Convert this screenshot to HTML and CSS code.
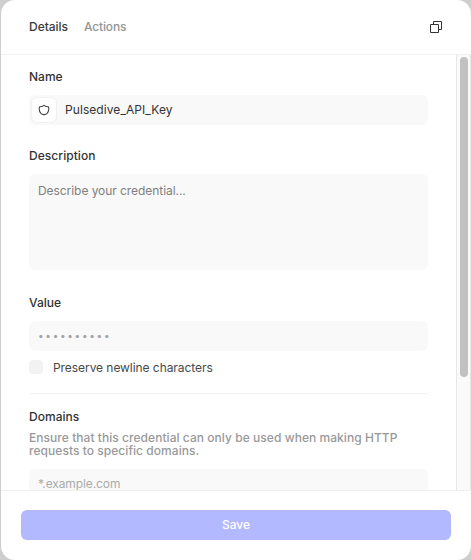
FILE: index.html
```html
<!DOCTYPE html>
<html lang="en">
<head>
<meta charset="utf-8">
<title>Credential</title>
<link rel="stylesheet" href="styles.css">
</head>
<body>
<main class="dialog">
  <header class="header">
    <nav class="tabs">
      <span class="tab tab-active">Details</span>
      <span class="tab">Actions</span>
    </nav>
    <svg class="copy-icon" width="12" height="12" viewBox="0 0 12 12" fill="none" stroke="#333" stroke-width="1"><path d="M3.5 3.5V.5h8v8h-3M.5 3.5h8v8h-8z"/></svg>
  </header>
  <div class="body">
    <form class="form">
      <label class="label">Name</label>
      <div class="field name-field">
        <span class="badge"><svg width="12" height="12" viewBox="0 0 12 12" fill="none" stroke="#444" stroke-width="1.1" stroke-linejoin="round"><path d="M6 1.4C4.8 2.3 3.3 2.8 1.5 2.8C.9 5.2 1.4 8 3.1 9.6C4 10.4 5 10.5 6 10.7C7 10.5 8 10.4 8.9 9.6C10.6 8 11.1 5.2 10.5 2.8C8.7 2.8 7.2 2.3 6 1.4Z"/></svg></span>
        <span class="name-text">Pulsedive_API_Key</span>
      </div>
      <label class="label label-description">Description</label>
      <div class="field area"><span class="describe">Describe your credential...</span></div>
      <label class="label label-value">Value</label>
      <div class="field secret"><span class="dots">••••••••••</span></div>
      <div class="check"><span class="box"></span><span class="check-text">Preserve newline characters</span></div>
      <section class="domains">
        <label class="label label-domains">Domains</label>
        <p class="hint">Ensure that this credential can only be used when making HTTP<br>requests to specific domains.</p>
        <div class="field domain-field"><span class="example">*.example.com</span></div>
      </section>
    </form>
    <div class="track"><div class="thumb"></div></div>
  </div>
  <footer class="footer"><button class="save" type="button">Save</button></footer>
</main>
</body>
</html>
```
FILE: styles.css
```css
* { box-sizing: border-box; }
body { margin: 0; background: #cecece; font: 12px/16px Inter, "Liberation Sans", sans-serif; color: #333; }
.dialog { display: flex; flex-direction: column; height: 560px; margin-left: 1px; background: #fff; border-radius: 14px; overflow: hidden; }
.header { display: flex; justify-content: space-between; align-items: center; height: 55px; padding: 0 29px 0 28px; border-bottom: 1px solid #f0f0f0; flex: none; }
.tabs { display: flex; gap: 16px; }
.tab { color: #949494; font-weight: 500; letter-spacing: -0.15px; }
.tab-active { color: #3a3a3a; letter-spacing: -0.03px; }
.copy-icon { display: block; }
.body { display: flex; height: 435px; overflow: hidden; flex: none; }
.form { flex: 1; padding: 14px 28px 0; }
.label { display: block; height: 16px; font-weight: 500; color: #333; letter-spacing: 0.02px; }
.field { background: #f9f9f9; border-radius: 6px; }
.name-field { display: flex; align-items: center; gap: 8px; height: 30px; margin-top: 10px; padding-left: 2px; }
.name-text { letter-spacing: 0.07px; }
.badge { display: grid; place-items: center; width: 26px; height: 26px; background: #fff; border: 1px solid #f0f0f0; border-radius: 6px; }
.label-description { margin-top: 23px; letter-spacing: 0.05px; }
.area { height: 96px; margin-top: 10px; padding: 9px; color: #808080; }
.describe { display: block; letter-spacing: -0.06px; }
.example { display: block; letter-spacing: -0.1px; }
.label-value { margin-top: 25px; }
.secret { display: flex; align-items: center; height: 30px; margin-top: 10px; padding: 0 9px 2px; }
.dots { color: #a3a3a3; font-size: 10px; letter-spacing: 1.7px; }
.check { display: flex; align-items: center; gap: 10px; height: 16px; margin-top: 9px; color: #484848; letter-spacing: -0.06px; }
.box { width: 14px; height: 14px; margin-top: -2px; border-radius: 4px; background: #f2f2f2; }
.domains { margin-top: 17px; padding-top: 15px; border-top: 1px solid #f2f2f2; }
.hint { margin: 6px 0 0; line-height: 13px; font-weight: 500; color: #999; white-space: nowrap; letter-spacing: 0.05px; }
.domain-field { height: 30px; margin-top: 12px; padding: 7px 9px; color: #aaa; }
.track { width: 15px; padding: 2px 2px 0 3px; background: #fafafa; border: solid #e7e7e7; border-width: 0 1px; }
.thumb { width: 8px; height: 320px; border-radius: 4px; background: #c1c1c1; }
.footer { height: 70px; padding: 19px 20px; border-top: 1px solid #f0f0f0; }
.save { display: block; width: 100%; height: 30px; padding: 0; border: 0; border-radius: 6px; background: #b2b9ff; color: #fff; font: 500 12px/16px Inter, "Liberation Sans", sans-serif; }
```
